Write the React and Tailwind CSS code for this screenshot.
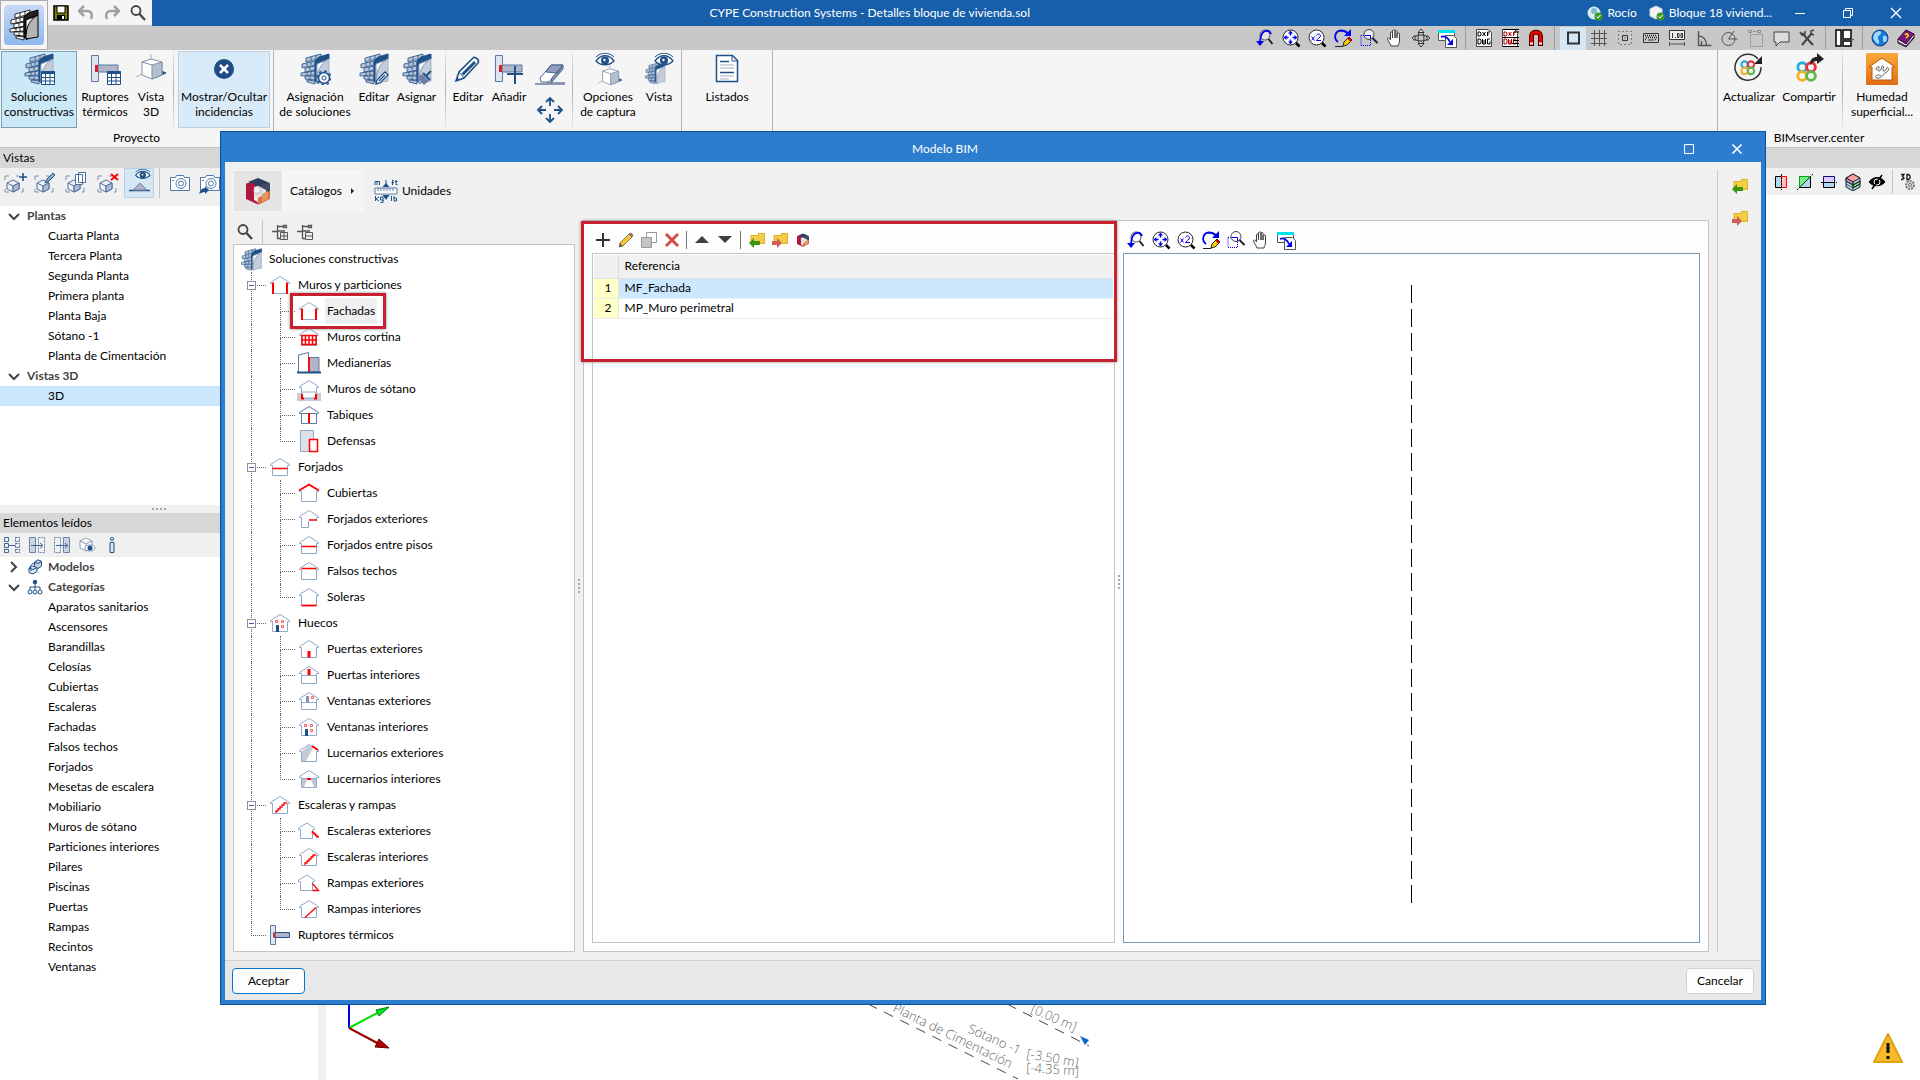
import { useState } from 'react';
import clsx from 'clsx';

const NAVY = '#1f5189';
const STEEL = '#8fa9c8';

/* ---------- Generic pieces ---------- */

const Icon = ({ size = 20, box = 20, children }) => (
  <svg width={size} height={size} viewBox={`0 0 ${box} ${box}`} fill="none" stroke="#404040" className="shrink-0">
    {children}
  </svg>
);

const IconButton = ({ label, className, children }) => (
  <button type="button" aria-label={label} className={clsx('flex shrink-0 items-center justify-center', className)}>
    {children}
  </button>
);

/* ---------- Zoom / view icons ---------- */

const ZoomBackIcon = () => (
  <Icon>
    <circle cx="10" cy="7" r="5" stroke="#555" fill="#fff" fillOpacity=".5" />
    <path d="M13.500 11l4 5" strokeWidth="2" stroke="#222" />
    <path d="M16 6C14 1 8 2 6 8c-1 3-1 5-1 8" stroke="#0000f0" strokeWidth="1.800" />
    <path d="M1 13h8l-4 5z" fill="#0000f0" stroke="none" />
  </Icon>
);

const ZoomAllIcon = () => (
  <Icon>
    <circle cx="9.500" cy="9.500" r="7.500" fill="#fff" stroke="#222" />
    <path d="M15 15l3.500 3.500" strokeWidth="2.500" stroke="#000" />
    <path d="M9.500 5v2.500M9.500 11.500V14M5 9.500h2.500M11.500 9.500H14" stroke="#0000f0" strokeWidth="1.500" />
    <path d="M9.500 2.500l2.500 3H7zM9.500 16.500l2.500-3H7zM2.500 9.500l3-2.500v5zM16.500 9.500l-3-2.500v5z" fill="#0000f0" stroke="none" />
  </Icon>
);

const ZoomTwoIcon = () => (
  <Icon>
    <circle cx="9.500" cy="9.500" r="7.500" fill="#fff" stroke="#222" />
    <path d="M15 15l3.500 3.500" strokeWidth="2.500" stroke="#000" />
    <path d="M4.500 8.500l3 4M7.500 8.500l-3 4M9.500 7.500C10 5.500 13.500 5.500 13.500 8c0 1.500-3 2.500-4 4.500H14" stroke="#0000f0" />
  </Icon>
);

const RedrawIcon = () => (
  <Icon>
    <path d="M5 14C0 10 2 3 8 2.500c3 0 5 1 7 3" stroke="#0000f0" strokeWidth="1.800" />
    <path d="M18 1v7h-7z" fill="#0000f0" stroke="none" />
    <path d="M2 18.500h8" stroke="#222" />
    <path d="M10 18l1-4 5-5 3 3-5 5z" fill="#f4d400" stroke="#222" />
    <path d="M15 10l3 3" stroke="#e00000" strokeWidth="2" />
  </Icon>
);

const ZoomWindowIcon = () => (
  <Icon>
    <path d="M2 7.500h9.500v10H2z" stroke="#0000f0" strokeDasharray="1 1" />
    <circle cx="10" cy="6.500" r="5" fill="#fff" fillOpacity=".6" stroke="#444" />
    <path d="M6 7.500h5.500V11" stroke="#0000f0" />
    <path d="M13.500 10l5 5" strokeWidth="2" stroke="#222" />
  </Icon>
);

const HandIcon = () => (
  <Icon>
    <path
      d="M6 18C5 15 3 13 2.500 11c0-1.500 2-1.500 3 1V5c0-1.500 2-1.500 2 0v5V3c0-1.500 2.500-1.500 2.500 0v7V3.500c0-1.500 2-1.500 2 0V10 6c0-1.500 2.500-1.500 2.500 0v7c0 2-1.500 3-1.500 5z"
      fill="#fff"
    />
  </Icon>
);

const OrbitIcon = () => (
  <Icon>
    <ellipse cx="10" cy="10" rx="7" ry="3" stroke="#333" />
    <ellipse cx="10" cy="10" rx="3" ry="7" stroke="#333" />
    <path d="M10 1l3 3.500H7zM10 19l3-3.500H7zM1 10l3-2.500v5zM19 10l-3-2.500v5z" fill="#ddd" stroke="#333" />
  </Icon>
);

const CopyWindowIcon = () => (
  <Icon>
    <path d="M1.500 2.500h16v10h-16z" fill="#fff" stroke="#555" />
    <path d="M1 2h17v3H1z" fill="#00e4f0" stroke="none" />
    <path d="M8.500 7.500h8l3 3v9h-11z" fill="#fff" stroke="#555" />
    <path d="M4 9c4-2 7 1 9 5" stroke="#0000f0" strokeWidth="1.600" />
    <path d="M16 11v6h-6z" fill="#0000f0" stroke="none" />
  </Icon>
);

const viewTools = [
  ['Vista anterior', ZoomBackIcon],
  ['Ventana completa', ZoomAllIcon],
  ['Zoom x2', ZoomTwoIcon],
  ['Redibujar', RedrawIcon],
  ['Marcar zoom', ZoomWindowIcon],
  ['Mover imagen', HandIcon],
];

/* ---------- Top right toolbar icons ---------- */

const DxfIcon = ({ color = '#000', children }) => (
  <Icon>
    <path d="M2.500 1.500h12l3 3v14h-15z" fill="#fff" stroke="#444" />
    <path d="M4 4v4h2l1-1V5L6 4zM8.500 4l3 4M11.500 4l-3 4M13.500 8V4H16M13.500 6H15" stroke={color} />
    <path d="M4 11v5h2l1-1v-3l-1-1zM8.500 11v5h3v-5M10 12v4M16 11h-2.500v5H16v-2.500" stroke={color} />
    {children}
  </Icon>
);

const MagnetIcon = () => (
  <Icon>
    <path d="M5.500 18V8c0-5 9-5 9 0v10" stroke="#400" strokeWidth="5" />
    <path d="M5.500 17V8c0-5 9-5 9 0v9" stroke="#e80000" strokeWidth="3" />
    <path d="M4 15.500h3M13 15.500h3" stroke="#fff" strokeWidth="2" />
  </Icon>
);

const GridIcon = () => (
  <Icon>
    <path d="M5.500 2v16M10.500 2v16M15.500 2v16M2 5.500h16M2 10.500h16M2 15.500h16" stroke="#555" />
  </Icon>
);

const SnapIcon = () => (
  <Icon>
    <path d="M7.500 7.500h5v5h-5z" stroke="#333" />
    <path d="M3.500 3.500h13v13h-13z" stroke="#333" strokeDasharray="1 3" />
    <path d="M9.500 10h1" stroke="#333" />
  </Icon>
);

const KeyboardIcon = () => (
  <Icon>
    <path d="M2.500 5.500h15v9h-15z" fill="#ccc" stroke="#333" />
    <path d="M4 7.500h12M5 9.500h12M4 11.500h2M14 11.500h2" stroke="#222" strokeWidth="1.500" strokeDasharray="1 1" />
    <path d="M7 12h6" stroke="#333" />
  </Icon>
);

const DimensionIcon = () => (
  <Icon>
    <path d="M2.500 2.500h15v9h-15z" fill="#eee" stroke="#333" />
    <path d="M5.500 5v5M8.500 9v1M10.500 5.500h1.500v4h-1.500zM14 5.500h1.500v4H14z" stroke="#333" />
    <path d="M2.500 14v4M17.500 14v4M2.500 16h15" stroke="#555" />
  </Icon>
);

const AngleIcon = () => (
  <Icon>
    <path d="M5.500 3v14.500h13M5.500 8c5 0 8 4 8 9M8.500 13v4" stroke="#555" strokeWidth="1.400" />
  </Icon>
);

const PolarIcon = () => (
  <Icon>
    <circle cx="9.500" cy="11" r="6.500" stroke="#555" />
    <path d="M9.500 11h9M9.500 11L15 3" stroke="#555" />
  </Icon>
);

const SelectionIcon = () => (
  <Icon>
    <path d="M5.500 6.500h12v12h-12z" stroke="#777" strokeDasharray="1 1" />
    <path d="M3.500 2.500h3v2h-3zM12.500 2.500h3v2h-3zM8 3.500h3" stroke="#888" />
  </Icon>
);

const CommentIcon = () => (
  <Icon>
    <path d="M3 4h15v10H9l-4 4v-4H3z" stroke="#444" fill="#ddd" />
  </Icon>
);

const ToolsIcon = () => (
  <Icon>
    <path d="M5 5l11 12M15 5L5 17" stroke="#444" strokeWidth="2" />
    <path d="M3 4l2 3 3-1V3M17 2l-3 1v3l3 1" stroke="#444" strokeWidth="1.500" />
  </Icon>
);

const LayoutIcon = () => (
  <Icon>
    <path d="M2 2h5v16H2zM9 2h8v9H9zM9 13h8v5H9z" stroke="#000" strokeWidth="1.500" fill="#fff" />
    <path d="M18 11h2l-1 2z" fill="#333" stroke="none" />
  </Icon>
);

const GlobeIcon = () => (
  <Icon>
    <circle cx="9" cy="10" r="8" fill="#1c78d8" stroke="#0b3f8c" />
    <path d="M3 6c3-3 6-4 7-2s-2 3-3 5 2 3 1 6-5-3-6-5zM12 8c3-1 4 0 4 3s-3 4-4 2z" fill="#9fd8ff" stroke="none" />
  </Icon>
);

const BookIcon = () => (
  <Icon>
    <path d="M1 11L9 2l8 4-8 10z" fill="#7a1680" stroke="#2c0830" />
    <path d="M1 11v4l8 4 8-9V6l-8 10z" fill="#fff" stroke="#2c0830" />
    <path d="M1 14l8 4 8-9" stroke="#2c0830" />
    <path d="M8 7c1-2 4-1 3 1l-2 2" stroke="#ffd800" strokeWidth="1.600" />
  </Icon>
);

/* ---------- Ribbon icons (32px) ---------- */

const Wall = ({ size = 32, mono, children }) => {
  const line = mono ? '#000' : NAVY;
  const brick = mono ? '#fff' : '#b9c4d6';
  return (
    <Icon size={size} box={32}>
      <g fill={brick} stroke={line} strokeWidth=".8">
        <path d="M7 5l15-4v4L7 9zM3 11l13-3v4L3 15zM6 15l10-2v4L6 19zM2 20l14-2v4L2 23zM6 23h10v4L6 26zM8 27l8 1v3l-8-2z" />
        <path d="M12 4v3M17 2v4M8 10v3M12 9v3M11 14v3M8 19v3M12 18v4M11 24v3" />
      </g>
      <path d="M16 8l4-4 10-3v5L19 10v21l-3-3z" fill={mono ? '#222' : NAVY} stroke={line} />
      <path d="M18 30V13L30 6v22z" fill={mono ? '#b4b4b4' : '#c4cbdb'} stroke={mono ? '#000' : '#a5b1c8'} />
      <path d="M18 25c1-8 4-14 10-18L18 11z" fill="#fff" stroke={mono ? '#000' : '#8797b4'} />
      {children}
    </Icon>
  );
};

const TableBadge = () => (
  <g>
    <path d="M18.500 18.500h13v13h-13z" fill="#fff" stroke={NAVY} />
    <path d="M18.500 19.500h13" stroke={NAVY} strokeWidth="3" />
    <path d="M18.500 24.500h13M18.500 28h13M22.500 21v10M27 21v10" stroke={NAVY} />
  </g>
);

const GearBadge = () => (
  <g>
    <circle cx="25" cy="25" r="5.500" fill="#f5f5f5" stroke={NAVY} strokeWidth="1.500" />
    <circle cx="25" cy="25" r="7" stroke={NAVY} strokeWidth="1.500" strokeDasharray="2.500 3" />
    <circle cx="25" cy="25" r="2" fill="#fff" stroke={NAVY} />
  </g>
);

const PencilBadge = () => <path d="M18 31l1-4 8-8 3 3-8 8zM21 28l6-6" fill="#fff" stroke={NAVY} strokeWidth="1.300" />;

const BrushBadge = () => (
  <g>
    <path d="M25 23l5-5" stroke={NAVY} strokeWidth="2" />
    <path d="M21 21l7 7-5 4-7-7z" fill="#6b7fa8" stroke="none" />
    <path d="M22 20l7 7" stroke={NAVY} strokeWidth="2" />
  </g>
);

const Ruptor = ({ children }) => (
  <Icon size={32} box={32}>
    <path d="M2.500 2.500h7v26h-7z" fill="#dde5ee" stroke="#5b7ba3" />
    <path d="M9 12h20v7H9z" fill="#b2b5c9" stroke="#5b7ba3" />
    <path d="M6 12h3v7H6z" fill="#d8202c" stroke="none" />
    {children}
  </Icon>
);

const CubeShape = () => (
  <g>
    <path d="M1 24l8-4M16 1v5" stroke="#a8b0c0" />
    <path d="M22 16l9 4-9 4z" fill={NAVY} stroke={NAVY} />
    <path d="M16 6l11 3v13l-10 4-10-4V9z" fill="#fff" stroke="#7f90ab" />
    <path d="M17 12l10-3v13l-10 4z" fill="#b6bfd0" stroke="#7f90ab" />
    <path d="M7 9l10 3" stroke="#7f90ab" />
  </g>
);

const Eye = ({ x = 0 }) => (
  <g transform={`translate(${x} 0)`}>
    <path d="M2 8c5-7 13-7 18 0-5 5-13 5-18 0z" fill="#fff" stroke={NAVY} strokeWidth="1.300" />
    <circle cx="11" cy="7.500" r="4" fill={NAVY} stroke="none" />
    <circle cx="10.500" cy="7" r="1.200" fill="#fff" stroke="none" />
    <path d="M2 4c5-5 13-5 18 0" stroke={NAVY} />
  </g>
);

const PencilIcon = () => (
  <Icon size={32} box={32}>
    <path d="M4 28l3-9L21 5c2-2 7 2 5 5L12 25z" fill="#fff" stroke={NAVY} strokeWidth="1.600" />
    <path d="M10.500 21.500L23 9" stroke={NAVY} strokeWidth="3" />
    <path d="M7 19l5 6" stroke={NAVY} />
    <path d="M4 28l1-4 3 3z" fill={NAVY} stroke="none" />
  </Icon>
);

const EraserIcon = () => (
  <Icon size={32} box={32}>
    <path d="M1 27h12v2H1zM13 26h18v3H13z" fill="#8f97b5" stroke="none" />
    <path d="M6 22L17 9h12L18 22l-3 4H7z" fill="#fff" stroke="#46688f" />
    <path d="M12 16l5-7h12l-5 8zM18 22l11-13v4L17 27z" fill="#8f9bb8" stroke="#46688f" />
  </Icon>
);

const MoveIcon = () => (
  <Icon size={28} box={28}>
    <path d="M14 2v8M14 18v8M2 14h8M18 14h8M10 6l4-4 4 4M10 22l4 4 4-4M6 10l-4 4 4 4M22 10l4 4-4 4" stroke={NAVY} strokeWidth="1.800" />
  </Icon>
);

const ReportIcon = () => (
  <Icon size={32} box={32}>
    <path d="M5.500 2.500h16l5 5v21h-21z" fill="#fff" stroke={NAVY} strokeWidth="1.500" />
    <path d="M21 2v6h6" stroke={NAVY} />
    <path d="M9 8.500h9M9 19.500h14" stroke={NAVY} strokeWidth="1.500" />
    <path d="M9 12h14M9 15h14M9 23h14M9 26h9" stroke="#a8adc0" />
  </Icon>
);

const CrossCircleIcon = () => (
  <Icon size={32} box={32}>
    <circle cx="16" cy="16" r="10" fill="#1f4b86" stroke="none" />
    <path d="M12 12l8 8M20 12l-8 8" stroke="#fff" strokeWidth="2.500" />
  </Icon>
);

const Knot = () => (
  <g strokeWidth="2.600">
    <circle cx="12" cy="12" r="4" stroke="#22aee0" />
    <circle cx="20" cy="12" r="4" stroke="#e4353c" />
    <circle cx="12" cy="20" r="4" stroke="#f4b020" />
    <circle cx="20" cy="20" r="4" stroke="#5cb848" />
  </g>
);

const RefreshKnotIcon = () => (
  <Icon size={32} box={32}>
    <path d="M25 6A13 13 0 1 0 28 14" stroke="#333" strokeWidth="1.500" />
    <path d="M29 3v8h-8z" fill="#222" stroke="none" />
    <g transform="translate(2 2) scale(.8)">
      <Knot />
    </g>
  </Icon>
);

const ShareKnotIcon = () => (
  <Icon size={32} box={32}>
    <g transform="translate(-4 1) scale(1.100)">
      <Knot />
    </g>
    <path d="M17 12c0-6 3-8 7-8V0l7 6-7 5V8c-3 0-5 2-7 4z" fill="#222" stroke="none" />
  </Icon>
);

const HumidityIcon = () => (
  <Icon size={32} box={32}>
    <defs>
      <linearGradient id="humidity" x1="0" y1="0" x2="0" y2="1">
        <stop offset="0" stopColor="#f9a93a" />
        <stop offset="1" stopColor="#e06c14" />
      </linearGradient>
    </defs>
    <rect width="32" height="32" rx="1" fill="url(#humidity)" stroke="none" />
    <path d="M3 14L16 5l13 9h-3v13H6V14z" fill="#fff" stroke="#b35a10" />
    <path d="M10 17c0-3 2-4 3-3s-3 4 0 4 2-6 4-5-2 5 1 5 2-5 4-3-1 4-3 5-2 4-4 3-3-2-5 0 3 3 5 1" stroke="#555" />
  </Icon>
);

/* ---------- Small icons of the side panels ---------- */

const CaptureCube = ({ children }) => (
  <Icon size={24} box={24}>
    <path d="M2 9V5h4M2 18v3h4M18 21h2v-4M13 5h3" stroke="#7a90ae" />
    <path d="M4 12l6-3 6 3v6l-6 3-6-3z" fill="#eef2f7" stroke="#4f6f9b" />
    <path d="M4 12l6 3 6-3M10 15v6" stroke="#4f6f9b" />
    <path d="M10 15l6-3v6l-6 3z" fill="#aebbd0" stroke="#4f6f9b" />
    {children}
  </Icon>
);

const CameraIcon = ({ children }) => (
  <Icon size={24} box={24}>
    <path d="M2.500 6.500h5l1-2h7l1 2h5v13h-19z" fill="#fff" stroke="#4f78a8" />
    <circle cx="13" cy="12.500" r="5" stroke="#4f78a8" />
    <circle cx="13" cy="12.500" r="2.500" stroke="#4f78a8" />
    <path d="M4 9.500h2" stroke="#4f78a8" />
    {children}
  </Icon>
);

const VisibilityIcon = () => (
  <Icon size={28} box={28}>
    <path d="M4 21.500h21" stroke={NAVY} strokeWidth="1.500" />
    <path d="M8 21l7-7 7 7z" fill="#aeb2c6" stroke="#7c86a8" />
    <g transform="translate(9 0) scale(.8)">
      <Eye />
    </g>
  </Icon>
);

const FilterAllIcon = () => (
  <Icon size={18} box={18}>
    <path d="M1.500 1.500h4v4h-4zM1.500 7.500h4v4h-4zM1.500 13.500h4v3h-4zM5 9.500h7" stroke="#3f6798" />
    <path d="M12.500 1.500h4v4h-4zM12.500 7.500h4v4h-4zM12.500 13.500h4v3h-4z" stroke="#3f6798" strokeDasharray="2 1" />
  </Icon>
);

const FilterSideIcon = ({ flip }) => (
  <Icon size={18} box={18}>
    <path d="M1.500 1.500h6v15h-6z" fill={flip ? 'none' : '#cdd5e4'} stroke="#6884aa" strokeDasharray={flip ? '2 1' : '0'} />
    <path d="M10.500 1.500h6v15h-6z" fill={flip ? '#cdd5e4' : 'none'} stroke="#6884aa" strokeDasharray={flip ? '0' : '2 1'} />
    <path d="M3 9.500h11M12 7l3 2.500-3 2.500" stroke="#3f6798" />
  </Icon>
);

const CubeEyeIcon = () => (
  <Icon size={18} box={18}>
    <path d="M2 5l6-3 6 3v7l-6 3-6-3zM2 5l6 3 6-3M8 8v7" fill="#fff" stroke="#8b9cb8" />
    <ellipse cx="12" cy="12" rx="5" ry="3" fill="#fff" stroke="#8b9cb8" />
    <circle cx="12" cy="12" r="2.500" fill={NAVY} stroke="none" />
  </Icon>
);

const InfoIcon = () => (
  <Icon size={18} box={18}>
    <circle cx="9" cy="3" r="1.500" stroke={NAVY} />
    <path d="M7 6.500h4v10H7z" stroke={NAVY} fill="#dbe5f0" />
  </Icon>
);

const ModelsIcon = () => (
  <Icon size={16} box={16}>
    <path d="M7.500 3L11 .8l3.500 1.500v5L11 9.500 7.500 8z" fill="#c8d1df" stroke={NAVY} />
    <path d="M7.500 3L11 4.500l3.500-2" stroke={NAVY} />
    <path d="M2 9l3.500-2L10 8.500v4L6 15l-4-1.500z" fill="#dde5ef" stroke={NAVY} />
    <path d="M2 9l4 1.500L10 8.500M4.500 12C2 8 4 4.500 7 4.500" stroke={NAVY} />
  </Icon>
);

const CategoriesIcon = () => (
  <Icon size={16} box={16}>
    <circle cx="8" cy="3" r="2.200" fill={NAVY} stroke="none" />
    <path d="M8 4v7M3 11V8h10v3" stroke={NAVY} />
    <circle cx="3" cy="13" r="2" stroke={NAVY} fill="#fff" />
    <circle cx="8" cy="13" r="2" stroke={NAVY} fill="#fff" />
    <circle cx="13" cy="13" r="2" stroke={NAVY} fill="#fff" />
  </Icon>
);

const FolderIcon = ({ out }) => (
  <Icon size={18} box={18}>
    <path d="M3 4.500h7.500v-2h6v10H3z" fill="#f2ce46" stroke="#e0b020" />
    {out ? (
      <path d="M1 10h5V7l5 5-5 5v-3H1z" fill="#cf5d5d" stroke="none" />
    ) : (
      <path d="M12 10H6V7l-5 5 5 5v-3h6z" fill="#3c9410" stroke="none" />
    )}
  </Icon>
);

const CatalogLogo = ({ size }) => (
  <Icon size={size} box={28}>
    <g stroke="none">
      <path d="M4 5L14 1l12 5-11 5z" fill="#2f3e5c" />
      <path d="M13 9l13-3v9l-4 1z" fill="#3d4a68" />
      <path d="M2 6.500l5-1 6 4v13l1 5L2 22z" fill="#b0153f" />
      <path d="M14 20l12-6v8l-12 6z" fill="#d9733e" />
      <path d="M10 10l4-1 8 4v3l-8 5v4l-4-2z" fill="#efe6e3" />
      <path d="M18 17l6-3v8l-6 3z" fill="#e39468" />
      <circle cx="14" cy="14" r="4.500" fill="#d4d4d4" />
      <circle cx="13" cy="13" r="2.500" fill="#f2f2f2" />
    </g>
  </Icon>
);

const SearchIcon = () => (
  <Icon size={18} box={18}>
    <circle cx="7" cy="6.500" r="4.500" stroke="#444" strokeWidth="1.800" />
    <path d="M10.500 10l5.500 6" stroke="#444" strokeWidth="2.400" />
  </Icon>
);

const TreeToolIcon = ({ collapse }) => (
  <Icon size={18} box={18}>
    <path d="M1 8.500h6M6.500 2v13.500h3M6 3.500h7M12.500 2.500h3v2h-3zM6 8h8" stroke="#555" strokeWidth="1.300" />
    <path d="M9.500 9.500h7v7h-7zM9.500 13h7" fill="#f0f0f0" stroke="#555" />
    {!collapse && <path d="M13 9.500v7" stroke="#555" />}
  </Icon>
);

/* ---------- House icons of the catalogue tree ---------- */

const houseOutline = 'M4.500 10.500V20.500H19.500V10.500M4.500 10.500H2.500V9.500L12 3.500L21.500 9.500V10.500H19.500';
const smallHouse = 'M3.500 10.500V19.500H15.500V10.500M3.500 10.500H1.500V9L10 4L17.500 9V10.500H15.500';

const houseMarks = {
  walls: <path d="M5 9.500v11.500M19 9.500v11.500" stroke="red" strokeWidth="2" />,
  curtain: (
    <g>
      <path d="M5 10h14v10H5z" fill="#fff" stroke="none" />
      <path d="M5 10v10M8.500 10v10M12 10v10M15.500 10v10M19 10v10M4 10.500h16M4 15h16M4 19.500h16" stroke="red" strokeWidth="1.500" />
    </g>
  ),
  basement: (
    <g>
      <path d="M0 16h24v8H0z" fill="#c9c9d4" stroke="none" />
      <path d="M5 15h14v6H5z" fill="#fff" stroke={STEEL} />
      <path d="M7 21.500H5V17M17 21.500h2V17" stroke="red" strokeWidth="2" />
    </g>
  ),
  partition: (
    <g>
      <path d="M4.500 10.500h15" stroke="#5b7ba3" />
      <path d="M12 10v10" stroke="red" strokeWidth="2" />
    </g>
  ),
  slab: <path d="M4.500 13.500h15" stroke="red" strokeWidth="1.500" />,
  roof: <path d="M2 9.500L12 3.500l10 6" stroke="red" strokeWidth="1.800" />,
  outerSlab: (
    <g>
      <path d="M12 13.500h9v9h-9z" fill="#fff" stroke="none" />
      <path d="M11.500 21v-7" stroke={STEEL} />
      <path d="M12 13h8" stroke="red" strokeWidth="1.500" />
    </g>
  ),
  ceiling: <path d="M4.500 9.500h15" stroke="red" strokeWidth="1.500" />,
  ground: <path d="M4.500 20.500h15" stroke="red" strokeWidth="1.800" />,
  openings: (
    <g>
      <path d="M8 14h3v7H8z" fill={NAVY} stroke="none" />
      <path d="M7.500 9.500h2v2h-2zM13.500 9.500h2v2h-2zM13.500 14.500h2v2h-2z" stroke="#f55" />
    </g>
  ),
  outerDoor: <path d="M12 14v6.500" stroke="red" strokeWidth="3" />,
  innerDoor: (
    <g>
      <path d="M4.500 12.500h15" stroke={STEEL} />
      <path d="M12 6v6" stroke="red" strokeWidth="3" />
    </g>
  ),
  outerWindow: (
    <g>
      <path d="M4.500 13.500h15" stroke={STEEL} />
      <path d="M10.500 7v6" stroke="#8591ad" strokeWidth="3" />
      <path d="M14.500 7.500h2v2h-2z" stroke="#f55" />
    </g>
  ),
  outerSkylight: (
    <g>
      <path d="M5 10l7-6 4 3-7 13H5z" fill="#c6cad6" stroke="none" />
      <path d="M15 5l6 4" stroke="red" strokeWidth="2" />
    </g>
  ),
  innerSkylight: (
    <g>
      <path d="M5 11h14v9H5z" fill="#c0c6d4" stroke="none" />
      <path d="M10 13h4l3 7H7z" fill="#fff" stroke="none" />
      <path d="M4.500 11.500h15" stroke={STEEL} />
      <path d="M10 12h4" stroke="red" strokeWidth="2" />
    </g>
  ),
  stairs: <path d="M8 20v-2h2v-2h2v-2h2v-2h2v-2h3" stroke="red" strokeWidth="1.300" />,
  ramp: <path d="M8 20.500L19 10.500" stroke="red" strokeWidth="1.300" />,
};

const yardMarks = {
  outerStairs: <path d="M15.500 12v1.500H17V15h1.500v1.500H20V18h2" stroke="red" strokeWidth="1.500" />,
  outerRamp: <path d="M15.500 12.500l6 7h-6" stroke="red" strokeWidth="1.300" />,
};

const TreeIcon = ({ kind }) => {
  if (kind === 'party') {
    return (
      <Icon size={24} box={24}>
        <path d="M1.500 21V4l10-2.500V21" stroke="#5b7ba3" />
        <path d="M12 6.500h10V21H12z" fill="#b2b5c9" stroke="#5b7ba3" />
        <path d="M12 6v15" stroke="red" strokeWidth="1.800" />
        <path d="M0 21.500h24" stroke="#1c5288" strokeWidth="2" />
      </Icon>
    );
  }
  if (kind === 'rail') {
    return (
      <Icon size={24} box={24}>
        <path d="M3.500 1.500h13v21h-13z" fill="#dce1ea" stroke={STEEL} />
        <path d="M12.500 10.500h8v12h-8z" fill="#fff" stroke="red" strokeWidth="1.500" />
      </Icon>
    );
  }
  if (kind === 'ruptor') {
    return (
      <Icon size={24} box={24}>
        <path d="M2.500 2.500h5v19h-5z" fill="#dde5ee" stroke="#5b7ba3" />
        <path d="M7 9.500h14.500v5H7z" fill="#b2b5c9" stroke={NAVY} />
        <path d="M5 9.500h2v5H5z" fill="#d8202c" stroke="none" />
      </Icon>
    );
  }
  if (yardMarks[kind]) {
    return (
      <Icon size={24} box={24}>
        <path d={smallHouse} stroke={STEEL} />
        {yardMarks[kind]}
      </Icon>
    );
  }
  return (
    <Icon size={24} box={24}>
      <path d={houseOutline} stroke={kind === 'partition' ? '#5b7ba3' : STEEL} />
      {houseMarks[kind]}
    </Icon>
  );
};

/* ---------- Data ---------- */

const floors = ['Cuarta Planta', 'Tercera Planta', 'Segunda Planta', 'Primera planta', 'Planta Baja', 'Sótano -1', 'Planta de Cimentación'];

const categories = [
  'Aparatos sanitarios', 'Ascensores', 'Barandillas', 'Celosías', 'Cubiertas', 'Escaleras', 'Fachadas', 'Falsos techos',
  'Forjados', 'Mesetas de escalera', 'Mobiliario', 'Muros de sótano', 'Particiones interiores', 'Pilares', 'Piscinas',
  'Puertas', 'Rampas', 'Recintos', 'Ventanas',
];

const catalogue = [
  {
    name: 'Muros y particiones',
    kind: 'walls',
    items: [
      ['Fachadas', 'walls'],
      ['Muros cortina', 'curtain'],
      ['Medianerías', 'party'],
      ['Muros de sótano', 'basement'],
      ['Tabiques', 'partition'],
      ['Defensas', 'rail'],
    ],
  },
  {
    name: 'Forjados',
    kind: 'slab',
    items: [
      ['Cubiertas', 'roof'],
      ['Forjados exteriores', 'outerSlab'],
      ['Forjados entre pisos', 'slab'],
      ['Falsos techos', 'ceiling'],
      ['Soleras', 'ground'],
    ],
  },
  {
    name: 'Huecos',
    kind: 'openings',
    items: [
      ['Puertas exteriores', 'outerDoor'],
      ['Puertas interiores', 'innerDoor'],
      ['Ventanas exteriores', 'outerWindow'],
      ['Ventanas interiores', 'openings'],
      ['Lucernarios exteriores', 'outerSkylight'],
      ['Lucernarios interiores', 'innerSkylight'],
    ],
  },
  {
    name: 'Escaleras y rampas',
    kind: 'stairs',
    items: [
      ['Escaleras exteriores', 'outerStairs'],
      ['Escaleras interiores', 'stairs'],
      ['Rampas exteriores', 'outerRamp'],
      ['Rampas interiores', 'ramp'],
    ],
  },
  { name: 'Ruptores térmicos', kind: 'ruptor', items: [] },
];

const references = ['MF_Fachada', 'MP_Muro perimetral'];

/* ---------- Header ---------- */

const ToolbarDivider = () => <span className="mx-[5px] h-6 w-px shrink-0 bg-[#9c9c9c]" />;

const TitleBar = () => (
  <header className="flex bg-[#c8c8c8]">
    <button type="button" aria-label="Archivo" className="flex h-[50px] w-12 shrink-0 items-center justify-center border border-[#a9a9a9] bg-[#f5f5f5]">
      <span className="flex h-10 w-10 items-center justify-center rounded-sm bg-gradient-to-b from-[#c6d9f4] to-[#90b6ea]">
        <Wall mono />
      </span>
    </button>
    <div className="min-w-0 flex-1">
      <div className="flex h-[26px] items-center bg-[#175fab] text-white">
        <div className="flex h-[26px] w-[104px] items-center justify-around border-b border-[#c8c8c8] bg-[#f5f5f5]">
          <IconButton label="Guardar">
            <Icon size={16} box={16}>
              <path d="M1 1h14v14H1z" fill="#808000" stroke="#000" strokeWidth="1.500" />
              <path d="M4 1h8v7H4z" fill="#fff" stroke="#000" />
              <path d="M4 10h8v5H4z" fill="#000" stroke="none" />
              <path d="M9 11h2v3H9z" fill="#fff" stroke="none" />
            </Icon>
          </IconButton>
          <IconButton label="Deshacer">
            <Icon size={16} box={16}>
              <path d="M6 1L1 6l5 5M1.500 6H9c4 0 6 3 4 8" stroke="#a0a0a0" strokeWidth="2.500" />
            </Icon>
          </IconButton>
          <IconButton label="Rehacer">
            <Icon size={16} box={16}>
              <path d="M10 1l5 5-5 5M14.500 6H7c-4 0-6 3-4 8" stroke="#a0a0a0" strokeWidth="2.500" />
            </Icon>
          </IconButton>
          <IconButton label="Buscar">
            <SearchIcon />
          </IconButton>
        </div>
        <h1 className="flex-1 text-center">CYPE Construction Systems - Detalles bloque de vivienda.sol</h1>
        <div className="flex items-center gap-1">
          <Icon size={16} box={16}>
            <circle cx="7" cy="8" r="6.500" fill="#d6ecf2" stroke="none" />
            <circle cx="7" cy="6" r="3" fill="#7fb9cc" stroke="none" />
            <circle cx="11.500" cy="11.500" r="4" fill="#3f9a2c" stroke="none" />
            <path d="M9.500 11.500l1.500 1.500 2.500-3" stroke="#fff" />
          </Icon>
          <span>Rocío</span>
          <span className="w-1" />
          <Icon size={16} box={16}>
            <path d="M7 1l6 3v7l-6 3-6-3V4z" fill="#f4f4f4" stroke="#cfd8e2" />
            <circle cx="11.500" cy="11.500" r="4" fill="#3f9a2c" stroke="none" />
            <path d="M9.500 11.500l1.500 1.500 2.500-3" stroke="#fff" />
          </Icon>
          <span>Bloque 18 viviend...</span>
        </div>
        <div className="flex pl-1">
          <IconButton label="Minimizar" className="h-[26px] w-12">
            <Icon size={12} box={12}><path d="M1 6.500h10" stroke="#fff" /></Icon>
          </IconButton>
          <IconButton label="Restaurar" className="h-[26px] w-12">
            <Icon size={12} box={12}><path d="M1.500 3.500h7v7h-7zM3.500 3.500v-2h7v7h-2" stroke="#fff" /></Icon>
          </IconButton>
          <IconButton label="Cerrar" className="h-[26px] w-12">
            <Icon size={12} box={12}><path d="M1 1l10 10M11 1L1 11" stroke="#fff" strokeWidth="1.400" /></Icon>
          </IconButton>
        </div>
      </div>
      <div className="flex h-6 items-center justify-end">
        {viewTools.map(([label, Glyph]) => (
          <IconButton key={label} label={label} className="w-[26px]"><Glyph /></IconButton>
        ))}
        <IconButton label="Órbita" className="w-[26px]"><OrbitIcon /></IconButton>
        <IconButton label="Copiar ventana" className="w-[26px]"><CopyWindowIcon /></IconButton>
        <ToolbarDivider />
        <IconButton label="Plantilla DXF" className="w-[26px]"><DxfIcon /></IconButton>
        <IconButton label="Capas DXF" className="w-[26px]">
          <DxfIcon color="#a00000"><path d="M3 9.500h16M3 1.500h16M14 4h5M13 12.500h6M12 15.500h7M3 18.500h16" stroke="#000" /></DxfIcon>
        </IconButton>
        <IconButton label="Captura" className="w-[26px]"><MagnetIcon /></IconButton>
        <ToolbarDivider />
        <IconButton label="Orto" className="h-[23px] w-[26px] bg-[#d5e6f5]">
          <Icon><path d="M5 4.500h11v11H5z" stroke="#333" strokeWidth="2" /></Icon>
        </IconButton>
        <IconButton label="Rejilla" className="w-[26px]"><GridIcon /></IconButton>
        <IconButton label="Ajuste a rejilla" className="w-[26px]"><SnapIcon /></IconButton>
        <IconButton label="Teclado" className="w-[26px]"><KeyboardIcon /></IconButton>
        <IconButton label="Cotas" className="w-[26px]"><DimensionIcon /></IconButton>
        <IconButton label="Perpendicular" className="w-[26px]"><AngleIcon /></IconButton>
        <IconButton label="Polar" className="w-[26px]"><PolarIcon /></IconButton>
        <IconButton label="Selección" className="w-[26px]"><SelectionIcon /></IconButton>
        <IconButton label="Comentario" className="w-[26px]"><CommentIcon /></IconButton>
        <IconButton label="Herramientas" className="w-[26px]"><ToolsIcon /></IconButton>
        <ToolbarDivider />
        <IconButton label="Disposición" className="w-[26px]"><LayoutIcon /></IconButton>
        <ToolbarDivider />
        <IconButton label="Idioma" className="w-[26px]"><GlobeIcon /></IconButton>
        <IconButton label="Ayuda" className="w-[26px]"><BookIcon /></IconButton>
      </div>
    </div>
  </header>
);

/* ---------- Ribbon ---------- */

const RibbonButton = ({ lines, icon, className }) => (
  <button type="button" className={clsx('flex h-[77px] shrink-0 flex-col items-center border pt-px leading-[15px]', className || 'border-transparent')}>
    {icon}
    <span className="mt-1 flex flex-col whitespace-nowrap">
      {lines.map((line) => (
        <span key={line}>{line}</span>
      ))}
    </span>
  </button>
);

const RibbonDivider = ({ tall }) => (
  <span className={clsx('w-px shrink-0', tall ? 'h-[97px] bg-[#b4b4b4]' : 'mx-1 h-[77px] bg-gradient-to-b from-[#e8e8e8] via-[#b0b0b0] to-[#e8e8e8]')} />
);

const Ribbon = () => (
  <div className="flex h-[98px] items-start border-b border-[#c4c4c4] bg-[#f5f5f5]">
    <div className="w-[273px]">
      <div className="flex items-center pt-px pl-px">
        <RibbonButton lines={['Soluciones', 'constructivas']} icon={<Wall><TableBadge /></Wall>} className="w-[76px] border-[#7ba0b2] bg-[#cce9f7]" />
        <RibbonButton lines={['Ruptores', 'térmicos']} icon={<Ruptor><TableBadge /></Ruptor>} className="w-14 border-transparent" />
        <RibbonButton lines={['Vista', '3D']} icon={<Icon size={32} box={32}><CubeShape /></Icon>} className="w-9 border-transparent" />
        <RibbonDivider />
        <RibbonButton lines={['Mostrar/Ocultar', 'incidencias']} icon={<CrossCircleIcon />} className="w-[92px] border-[#bcd0e2] bg-[#d9eaf8]" />
      </div>
      <p className="text-center leading-5">Proyecto</p>
    </div>
    <RibbonDivider tall />
    <div className="flex w-[407px] items-center pt-px">
      <RibbonButton lines={['Asignación', 'de soluciones']} icon={<Wall><GearBadge /></Wall>} className="w-[82px] border-transparent" />
      <RibbonButton lines={['Editar']} icon={<Wall><PencilBadge /></Wall>} className="w-9 border-transparent" />
      <RibbonButton lines={['Asignar']} icon={<Wall><BrushBadge /></Wall>} className="w-[49px] border-transparent" />
      <RibbonDivider />
      <RibbonButton lines={['Editar']} icon={<PencilIcon />} className="w-9 border-transparent" />
      <RibbonButton lines={['Añadir']} icon={<Ruptor><path d="M22 13v18M14 21h16" stroke={NAVY} strokeWidth="2" /></Ruptor>} className="w-[46px] border-transparent" />
      <div className="flex w-9 flex-col items-center gap-2">
        <IconButton label="Borrar"><EraserIcon /></IconButton>
        <IconButton label="Mover"><MoveIcon /></IconButton>
      </div>
      <RibbonDivider />
      <RibbonButton lines={['Opciones', 'de captura']} icon={<Icon size={32} box={32}><g transform="translate(5 11) scale(.8)"><CubeShape /></g><Eye x={2} /></Icon>} className="w-[62px] border-transparent" />
      <RibbonButton lines={['Vista']} icon={<Icon size={32} box={32}><g transform="translate(1 9) scale(.7)"><Wall /></g><Eye x={10} /></Icon>} className="w-10 border-transparent" />
    </div>
    <RibbonDivider tall />
    <div className="flex w-[90px] justify-center pt-px">
      <RibbonButton lines={['Listados']} icon={<ReportIcon />} />
    </div>
    <RibbonDivider tall />
    <div className="flex-1" />
    <RibbonDivider tall />
    <div className="w-[202px]">
      <div className="flex items-center pt-px">
        <RibbonButton lines={['Actualizar']} icon={<RefreshKnotIcon />} className="w-[62px] border-transparent" />
        <RibbonButton lines={['Compartir']} icon={<ShareKnotIcon />} className="w-[58px] border-transparent" />
        <RibbonDivider />
        <RibbonButton lines={['Humedad', 'superficial...']} icon={<HumidityIcon />} className="w-[70px] border-transparent" />
      </div>
      <p className="text-center leading-5">BIMserver.center</p>
    </div>
  </div>
);

/* ---------- Left side panels ---------- */

const Chevron = ({ open }) => (
  <Icon size={12} box={12}>
    <path d={open ? 'M1 4l5 5 5-5' : 'M3 1l5 5-5 5'} stroke="#444" strokeWidth="2" />
  </Icon>
);

const SideHeading = ({ open = true, icon, children }) => (
  <button type="button" aria-expanded={open} className="flex h-5 w-full items-center pl-2 font-bold text-[#444]">
    <Chevron open={open} />
    <span className={clsx('flex items-center pl-[7px]', icon && 'gap-[5px]')}>
      {icon}
      {children}
    </span>
  </button>
);

const SideItem = ({ active, children }) => (
  <li>
    <button type="button" className={clsx('block h-5 w-full pl-12 text-left', active && 'bg-[#cce8ff]')}>{children}</button>
  </li>
);

const SideBar = () => (
  <aside className="flex w-[318px] shrink-0 flex-col bg-white">
    <section className="h-[357px] shrink-0">
      <h2 className="h-5 bg-[#d7d7d7] pl-[3px]">Vistas</h2>
      <div className="flex h-[38px] items-start bg-[#f0f0f0]">
        <IconButton label="Nueva vista" className="h-[30px] w-[29px]"><CaptureCube><path d="M20 2v8M16 6h8" stroke={NAVY} strokeWidth="1.600" /></CaptureCube></IconButton>
        <IconButton label="Editar vista" className="h-[30px] w-[31px]"><CaptureCube><path d="M12 12l2-4 6-6 2 2-6 6z" fill="#8fa9c8" stroke={NAVY} /></CaptureCube></IconButton>
        <IconButton label="Duplicar vista" className="h-[30px] w-[31px]"><CaptureCube><path d="M11.500 3.500h7v10h-7zM14.500 1.500h7v10h-7z" fill="#fff" stroke="#4f6f9b" /></CaptureCube></IconButton>
        <IconButton label="Borrar vista" className="h-[30px] w-[33px]"><CaptureCube><path d="M15 3l7 6M22 3l-7 6" stroke="red" strokeWidth="1.800" /></CaptureCube></IconButton>
        <IconButton label="Visibilidad" className="h-[30px] w-[30px] border border-[#bcd0e2] bg-[#d5e6f5]"><VisibilityIcon /></IconButton>
        <span className="mx-[5px] h-[30px] w-px bg-[#c4c4c4]" />
        <IconButton label="Cámara" className="h-[30px] w-[29px]"><CameraIcon /></IconButton>
        <IconButton label="Cámara siguiente" className="h-[30px] w-[31px]"><CameraIcon><path d="M1 23c1-4 3-6 6-6v-2l4 4-4 4v-2c-3 0-4 1-6 2z" fill={NAVY} stroke="none" /></CameraIcon></IconButton>
      </div>
      <SideHeading>Plantas</SideHeading>
      <ul>
        {floors.map((name) => (
          <SideItem key={name}>{name}</SideItem>
        ))}
      </ul>
      <SideHeading>Vistas 3D</SideHeading>
      <ul>
        <SideItem active>3D</SideItem>
      </ul>
    </section>
    <div className="flex h-2 items-center justify-center gap-[2px] bg-[#f0f0f0]">
      {[0, 1, 2, 3].map((dot) => (
        <span key={dot} className="h-[2px] w-[2px] bg-[#a8a8a8]" />
      ))}
    </div>
    <section>
      <h2 className="h-5 bg-[#d7d7d7] pl-[3px]">Elementos leídos</h2>
      <div className="flex h-6 items-center gap-[7px] bg-[#f0f0f0] pl-[3px]">
        <IconButton label="Filtrar"><FilterAllIcon /></IconButton>
        <IconButton label="Filtrar izquierda"><FilterSideIcon /></IconButton>
        <IconButton label="Filtrar derecha"><FilterSideIcon flip /></IconButton>
        <IconButton label="Ver elementos"><CubeEyeIcon /></IconButton>
        <IconButton label="Información"><InfoIcon /></IconButton>
      </div>
      <SideHeading open={false} icon={<ModelsIcon />}>Modelos</SideHeading>
      <SideHeading icon={<CategoriesIcon />}>Categorías</SideHeading>
      <ul>
        {categories.map((name) => (
          <SideItem key={name}>{name}</SideItem>
        ))}
      </ul>
    </section>
  </aside>
);

/* ---------- 3D view behind the dialog ---------- */

const Viewport = () => (
  <main className="flex min-w-0 flex-1 flex-col bg-white">
    <div className="h-5 shrink-0 bg-[#d7d7d7]" />
    <div className="flex h-[27px] shrink-0 items-center justify-end bg-[#f0f0f0]">
      <IconButton label="Corte vertical" className="w-6">
        <Icon size={18} box={18}><path d="M3.500 3.500h6v11h-6z" fill="#add8ee" stroke="#000" /><path d="M9.500 3.500h5v11h-5z" fill="#ffc0c0" stroke="red" /><path d="M9.500 1v16" stroke="#000" strokeDasharray="2 1" /></Icon>
      </IconButton>
      <IconButton label="Corte inclinado" className="w-6">
        <Icon size={18} box={18}><path d="M3.500 3.500h11v11h-11z" fill="#add8ee" stroke="#000" /><path d="M3.500 14.500v-11h11z" fill="#7cf08c" stroke="#0a0" /><path d="M1 17L17 1" stroke="#000" strokeDasharray="2 1" /></Icon>
      </IconButton>
      <IconButton label="Corte horizontal" className="w-6">
        <Icon size={18} box={18}><path d="M3.500 3.500h11v6h-11z" fill="#d8ccff" stroke="#1a0a80" /><path d="M3.500 9.500h11v5h-11z" fill="#add8ee" stroke="#000" /><path d="M1 9.500h16" stroke="#000" strokeDasharray="2 1" /></Icon>
      </IconButton>
      <IconButton label="Capas" className="w-6">
        <Icon size={18} box={18}>
          <path d="M2 5l7-4 7 4v9l-7 4-7-4z" fill="#a8d8e8" stroke="#222" />
          <path d="M2 5l7 4 7-4-7-4z" fill="#f4a0a0" stroke="#222" />
          <path d="M2 5v3l7 4V9z" fill="#c0a8e8" stroke="#222" />
          <path d="M9 12l7-4v3l-7 4z" fill="#7cd070" stroke="#222" />
          <path d="M2 8l7 4 7-4M2 11l7 4 7-4M9 9v9" stroke="#222" strokeWidth=".7" />
        </Icon>
      </IconButton>
      <IconButton label="Ocultar" className="w-6">
        <Icon size={18} box={18}><path d="M1 9c4-6 12-6 16 0-4 5-12 5-16 0z" fill="#000" stroke="#000" /><circle cx="9" cy="9" r="3" fill="#000" stroke="#fff" /><path d="M4 16L14 2" stroke="#000" strokeWidth="1.500" /></Icon>
      </IconButton>
      <span className="mx-[3px] h-6 w-px bg-[#c4c4c4]" />
      <IconButton label="Opciones 3D" className="w-6">
        <Icon size={18} box={18}><circle cx="11" cy="12" r="4" fill="#ddd" stroke="#777" strokeWidth="2" strokeDasharray="2 1" /><circle cx="11" cy="12" r="1.500" fill="#fff" stroke="#666" /><path d="M2 1.500h3l-1.500 2L5 5 3.500 6.500H2M8 1.500v5h1.500L11 5V3L9.500 1.500z" stroke="#111" strokeWidth="1.300" /></Icon>
      </IconButton>
    </div>
    <div className="relative flex-1 overflow-hidden">
      <svg width="60" height="60" viewBox="0 0 60 60" className="absolute bottom-6 left-3" role="img" aria-label="Ejes">
        <path d="M11 0v32" stroke="#0000e0" strokeWidth="2" />
        <path d="M11 32l32-17" stroke="#00e000" strokeWidth="2" />
        <path d="M38 14l13-3-10 9z" fill="#00e81c" stroke="#007a10" />
        <path d="M11 32l32 17" stroke="#900" strokeWidth="2" />
        <path d="M41 43l10 9-14-1z" fill="#b00000" stroke="#600" />
      </svg>
      <svg width="260" height="90" viewBox="0 0 260 90" className="absolute bottom-0 left-[534px] font-['Open_Sans',sans-serif]" fill="#666" fontSize="13" fontWeight="300">
        <path d="M8 14l150 75M147 14l82 42" stroke="#444" strokeDasharray="10 8" />
        <path d="M220 46l9 4-4 5z" fill="#0a64d0" />
        <text x="32" y="21" transform="rotate(26 32 21)">Planta de Cimentación</text>
        <text x="107" y="42" transform="rotate(24 107 42)">Sótano -1</text>
        <text x="166" y="68" transform="rotate(10 166 68)">[-3.50 m]</text>
        <text x="166" y="82" transform="rotate(4 166 82)">[-4.35 m]</text>
        <text x="170" y="22" transform="rotate(24 170 22)">[0.00 m]</text>
      </svg>
      <svg width="32" height="32" viewBox="0 0 32 32" className="absolute right-4 bottom-4" role="img" aria-label="Aviso">
        <path d="M16 2l14 28H2z" fill="#f6bd28" stroke="#e0a010" strokeWidth="2" strokeLinejoin="round" />
        <path d="M16 11v10M16 24v3" stroke="#111" strokeWidth="3" />
      </svg>
    </div>
  </main>
);

/* ---------- Modelo BIM dialog ---------- */

const Connector = ({ last, children }) => (
  <span className="relative flex h-[26px] w-[15px] shrink-0 flex-col">
    <span className="h-[14px] border-b border-l border-dotted border-[#666]" />
    {!last && <span className="h-3 border-l border-dotted border-[#666]" />}
    {children}
  </span>
);

const TreeLabel = ({ kind, active, onClick, children }) => (
  <button type="button" onClick={onClick} className="flex h-[26px] items-center gap-1 pl-[2px]">
    <TreeIcon kind={kind} />
    <span className={clsx('h-[26px] px-[2px] leading-[26px]', active && 'bg-[#efefef]')}>{children}</span>
  </button>
);

const CatalogueTree = () => {
  const [selected, setSelected] = useState('Fachadas');
  const [closed, setClosed] = useState([]);

  const toggle = (name) => {
    setClosed((names) => (names.includes(name) ? names.filter((n) => n !== name) : [...names, name]));
  };

  return (
    <div className="flex-1 border border-[#c4c4c4] bg-white pt-px">
      <div className="flex h-[26px] items-center gap-[6px] pl-[6px]">
        <Wall size={23} />
        Soluciones constructivas
      </div>
      <ul className="pl-[17px]">
        {catalogue.map((group, g) => {
          const lastGroup = g === catalogue.length - 1;
          return (
            <li key={group.name}>
              <div className="flex">
                <Connector last={lastGroup}>
                  {group.items.length > 0 && (
                    <button
                      type="button"
                      aria-label={`Contraer ${group.name}`}
                      onClick={() => toggle(group.name)}
                      className="absolute top-[9px] -left-1 flex h-[9px] w-[9px] items-center justify-center border border-[#8f8f8f] bg-white"
                    >
                      <span className="h-px w-[5px] bg-[#3c5fa8]" />
                    </button>
                  )}
                </Connector>
                <TreeLabel kind={group.kind}>{group.name}</TreeLabel>
              </div>
              {!closed.includes(group.name) && (
                <ul>
                  {group.items.map(([name, kind], i) => (
                    <li key={name} className="relative flex">
                      <span className="w-[29px] border-l border-dotted border-[#666]" />
                      <Connector last={i === group.items.length - 1} />
                      <TreeLabel kind={kind} active={selected === name} onClick={() => setSelected(name)}>{name}</TreeLabel>
                      {name === 'Fachadas' && (
                        <span className="pointer-events-none absolute -top-[5px] left-[39px] z-10 h-9 w-24 border-[3px] border-[#c8202e] shadow-[0_0_3px_#888]" />
                      )}
                    </li>
                  ))}
                </ul>
              )}
            </li>
          );
        })}
      </ul>
    </div>
  );
};

const SplitDots = () => (
  <div className="flex w-2 shrink-0 flex-col items-center justify-center gap-[2px]">
    {[0, 1, 2, 3].map((dot) => (
      <span key={dot} className="h-[2px] w-[2px] bg-[#a8a8a8]" />
    ))}
  </div>
);

const ReferencePanel = () => (
  <div className="relative flex w-[523px] shrink-0 flex-col">
    <div className="flex h-8 items-center pt-[6px]">
      <IconButton label="Añadir" className="w-[22px]"><Icon size={18} box={18}><path d="M9 2v14M2 9h14" stroke="#333" strokeWidth="2" /></Icon></IconButton>
      <IconButton label="Editar" className="w-[23px]"><Icon size={18} box={18}><path d="M2 16l1-4L12 3l3 3-9 9z" fill="#f2c53a" stroke="#8c7a3c" /><path d="M12 3l2-1 2 2-1 2z" fill="#d06060" stroke="#777" /><path d="M2 16l1-4 3 3z" fill="#666" stroke="none" /></Icon></IconButton>
      <IconButton label="Copiar" className="w-[23px]"><Icon size={18} box={18}><path d="M6.500 1.500h10v10h-10z" fill="#fff" stroke="#999" /><path d="M1.500 6.500h10v10h-10z" fill="#c4c4c4" stroke="#999" /></Icon></IconButton>
      <IconButton label="Borrar" className="w-[23px]"><Icon size={18} box={18}><path d="M3 3l12 12M15 3L3 15" stroke="#d05050" strokeWidth="3" /></Icon></IconButton>
      <span className="mx-[3px] h-[18px] w-px bg-[#777]" />
      <IconButton label="Subir" className="w-[23px]"><Icon size={18} box={18}><path d="M2 12l7-7 7 7z" fill="#404040" stroke="none" /></Icon></IconButton>
      <IconButton label="Bajar" className="w-[23px]"><Icon size={18} box={18}><path d="M2 5l7 7 7-7z" fill="#404040" stroke="none" /></Icon></IconButton>
      <span className="mx-1 h-[18px] w-px bg-[#777]" />
      <IconButton label="Importar" className="w-[23px]"><FolderIcon /></IconButton>
      <IconButton label="Exportar" className="w-[23px]"><FolderIcon out /></IconButton>
      <IconButton label="Catálogo" className="w-[23px]"><CatalogLogo size={14} /></IconButton>
    </div>
    <div className="flex-1 border border-[#c4c4c4] bg-white p-px">
      <table className="w-full border-collapse leading-4">
        <thead>
          <tr className="h-[23px] border-b border-[#e0e0e0] bg-[#f0f0f0]">
            <td className="w-6 border-r border-[#dadada]" />
            <th scope="col" className="px-[6px] text-left font-normal">Referencia</th>
          </tr>
        </thead>
        <tbody>
          {references.map((name, i) => (
            <tr key={name} className={clsx('h-5 border-b border-[#ececec]', i === 0 && 'bg-[#cce8ff]')}>
              <th scope="row" className="w-6 border-r border-[#e4e4d8] bg-[#ffffc8] pr-[6px] text-right font-normal">{i + 1}</th>
              <td className="px-[6px]">{name}</td>
            </tr>
          ))}
        </tbody>
      </table>
    </div>
    <span className="pointer-events-none absolute top-0 -right-[2px] -left-[11px] z-10 h-[141px] border-[3px] border-[#c8202e] shadow-[0_0_3px_#888]" />
  </div>
);

const PreviewPanel = () => (
  <div className="flex min-w-0 flex-1 flex-col">
    <div className="flex h-8 items-center pt-[6px]">
      {viewTools.map(([label, Glyph]) => (
        <IconButton key={label} label={label} className="w-[25px]"><Glyph /></IconButton>
      ))}
      <IconButton label="Copiar ventana" className="w-[25px]"><CopyWindowIcon /></IconButton>
    </div>
    <div className="flex flex-1 justify-center border border-[#7a9ab8] bg-white py-[31px]">
      <svg width="2" height="618" role="img" aria-label="Sección del muro">
        <path d="M.5 0v618" stroke="#000" strokeWidth="1" strokeDasharray="18 6" />
      </svg>
    </div>
  </div>
);

const BimDialog = () => (
  <div role="dialog" aria-label="Modelo BIM" className="absolute top-[131px] right-[154px] bottom-[75px] left-[220px] flex flex-col border border-[#0a4f9f] bg-[#2d7dce] px-1 pb-1">
    <div className="flex h-[30px] shrink-0 items-center pt-[3px] text-white">
      <h2 className="flex-1 text-center">Modelo BIM</h2>
      <IconButton label="Maximizar" className="w-12"><Icon size={12} box={12}><path d="M1.500 1.500h9v9h-9z" stroke="#fff" /></Icon></IconButton>
      <IconButton label="Cerrar" className="w-12"><Icon size={12} box={12}><path d="M1.500 1.500l9 9M10.500 1.500l-9 9" stroke="#fff" strokeWidth="1.600" /></Icon></IconButton>
    </div>
    <div className="flex min-h-0 flex-1 bg-[#f0f0f0] pt-2 pb-2 pl-2">
      <div className="flex min-w-0 flex-1 flex-col">
        <div className="flex h-[42px] shrink-0 items-center">
          <button type="button" className="flex h-[42px] items-center border border-[#f5f5f5] bg-[#f5f5f5] pr-[7px]">
            <span className="flex h-10 w-12 items-center justify-center bg-[#e4e4e4]"><CatalogLogo size={28} /></span>
            <span className="pr-2 pl-2">Catálogos</span>
            <Icon size={6} box={6}><path d="M1 0l3 3-3 3z" fill="#222" stroke="none" /></Icon>
          </button>
          <button type="button" className="flex items-center gap-1 pl-[10px]">
            <Icon size={24} box={24}>
              <path d="M1 9h22v6H1z" fill="#fff" stroke="#5b7ba3" />
              <path d="M4 9v3M7 9v3M10 9v3M13 9v3M16 9v3M19 9v3" stroke="#5b7ba3" />
              <path d="M12 1v7" stroke={NAVY} />
              <path d="M8.500 8l3.500-4 3.500 4zM8.500 16h7L12 21z" fill={NAVY} stroke="none" />
              <path d="M1 6V2.500h2V6M3 2.500h2.500V6M18.500 6V1.500H20M17.500 3.500H20M22 1v4.500h1.500M21 2.500h2.500M1.500 17v5M5 18l-3 2 3 2M9 18H6.500v3H9v2.500H6.500M9 18v4M17.500 17v5M20 17v5h2.500v-3H20" stroke={NAVY} />
            </Icon>
            Unidades
          </button>
        </div>
        <div className="flex min-h-0 flex-1 pt-2">
          <div className="flex w-[342px] shrink-0 flex-col">
            <div className="flex h-6 shrink-0 items-center pl-[3px]">
              <IconButton label="Buscar" className="w-[18px]"><SearchIcon /></IconButton>
              <span className="mr-1 ml-2 h-6 w-px bg-[#c4c4c4]" />
              <IconButton label="Expandir" className="w-[25px]"><TreeToolIcon /></IconButton>
              <IconButton label="Contraer" className="w-[25px]"><TreeToolIcon collapse /></IconButton>
            </div>
            <CatalogueTree />
          </div>
          <SplitDots />
          <div className="flex min-w-0 flex-1 border border-[#c4c4c4] bg-[#fdfdfd] pr-2 pb-2 pl-2">
            <ReferencePanel />
            <SplitDots />
            <PreviewPanel />
          </div>
        </div>
      </div>
      <div className="ml-2 flex w-11 shrink-0 flex-col items-center gap-[14px] border-l border-[#c8c8c8] pt-[7px]">
        <IconButton label="Importar"><FolderIcon /></IconButton>
        <IconButton label="Exportar"><FolderIcon out /></IconButton>
      </div>
    </div>
    <div className="flex h-10 shrink-0 items-center justify-between border-t border-[#d0d0d0] bg-[#e8e8e8] px-[7px]">
      <button type="button" className="h-[26px] w-[73px] rounded border border-[#0078d4] bg-[#fdfdfd]">Aceptar</button>
      <button type="button" className="h-[26px] w-[68px] rounded border border-[#d0d0d0] bg-[#fdfdfd]">Cancelar</button>
    </div>
  </div>
);

const App = () => (
  <div className="relative flex min-h-screen flex-col overflow-hidden bg-white font-['Lato','Open_Sans',sans-serif] text-[12px] leading-5 text-black">
    <TitleBar />
    <Ribbon />
    <div className="flex flex-1">
      <SideBar />
      <div className="w-2 shrink-0 bg-[#f0f0f0]" />
      <Viewport />
    </div>
    <BimDialog />
  </div>
);

export default App;
